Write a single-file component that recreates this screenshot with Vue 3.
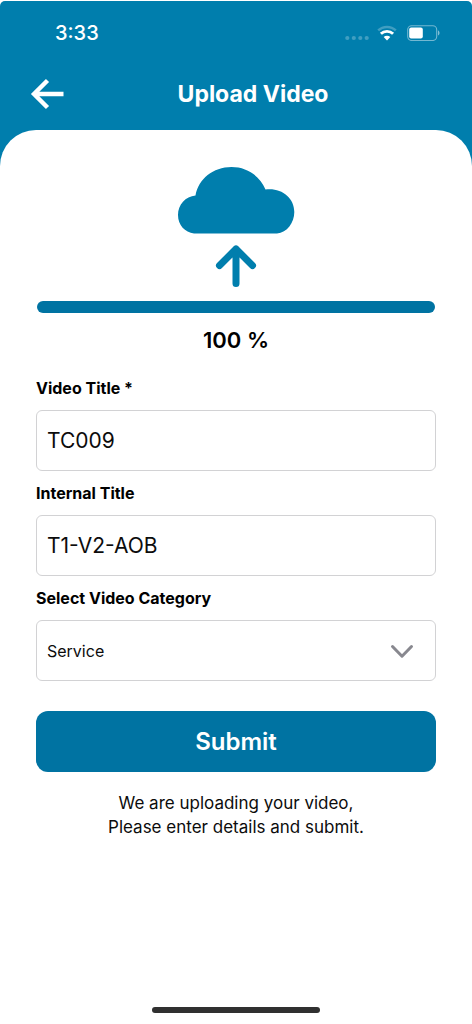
<script setup>
import { ref } from 'vue'

const progress = ref(100)
const videoTitle = ref('TC009')
const internalTitle = ref('T1-V2-AOB')
const category = ref('Service')
const categories = ['Service']
</script>

<template>
  <div class="screen">
    <header class="top">
      <div class="status">
        <span class="time">3:33</span>
        <div class="indicators">
          <svg class="dots" width="24" height="16" viewBox="0 0 24 16" aria-hidden="true">
            <g fill="#fff" opacity="0.25">
              <circle cx="2.3" cy="13" r="2.1" />
              <circle cx="8.8" cy="13" r="2.1" />
              <circle cx="15.3" cy="13" r="2.1" />
              <circle cx="21.7" cy="13" r="2.1" />
            </g>
          </svg>
          <svg class="wifi" width="20" height="16" viewBox="0 0 20 16" aria-hidden="true">
            <path d="M1.2 5.4A12.8 12.8 0 0 1 18.8 5.4" fill="none" stroke="#fff" stroke-width="2.5" opacity="0.25" />
            <path d="M3.9 8.8A8.8 8.8 0 0 1 16.1 8.8" fill="none" stroke="#fff" stroke-width="2.9" />
            <path d="M6.7 12.1A4.7 4.7 0 0 1 13.3 12.1L10 15.6Z" fill="#fff" />
          </svg>
          <svg class="battery" width="34" height="16" viewBox="0 0 34 16" aria-hidden="true">
            <rect x="0.7" y="0.7" width="29" height="14.8" rx="4" fill="none" stroke="#fff" stroke-width="1.1" opacity="0.45" />
            <rect x="2.2" y="2.6" width="13.6" height="11" rx="2" fill="#fff" />
            <path d="M31 5.6C33 6.2 33 9.8 31 10.6Z" fill="#fff" opacity="0.5" />
          </svg>
        </div>
      </div>
      <div class="bar">
        <button class="back" type="button" aria-label="Back">
          <svg width="34" height="32" viewBox="0 0 34 32" aria-hidden="true">
            <path d="M17.5 2.5L4 16L17.5 29.5M4 16H33.5" fill="none" stroke="#fff" stroke-width="4.4" />
          </svg>
        </button>
        <h1>Upload Video</h1>
      </div>
    </header>

    <main class="panel">
      <svg class="cloud" width="118" height="122" viewBox="0 0 118 122" aria-hidden="true">
        <path d="M17 67.5C8 66.5 1 59 1 49C1 38.5 8.5 30.5 18.5 29.5C21.5 13 36 1 54.5 1C70 1 83 10 88.5 23.6C104 21.5 117.3 31.5 117.3 46C117.3 57 110 66.5 100 67.5Z" fill="#007ead" />
        <path d="M59 117.5V83M42.5 99.5L59 83L75.5 99.5" fill="none" stroke="#007ead" stroke-width="7" stroke-linecap="round" stroke-linejoin="round" />
      </svg>
      <progress class="progress" :value="progress" max="100" aria-label="Upload progress"></progress>
      <p class="percent">{{ progress }} %</p>

      <form class="form" @submit.prevent>
        <div class="field">
          <label for="video-title">Video Title *</label>
          <input id="video-title" v-model="videoTitle" class="control" type="text" />
        </div>
        <div class="field">
          <label for="internal-title">Internal Title</label>
          <input id="internal-title" v-model="internalTitle" class="control" type="text" />
        </div>
        <div class="field">
          <label for="category">Select Video Category</label>
          <div class="select">
            <select id="category" v-model="category" class="control">
              <option v-for="item in categories" :key="item">{{ item }}</option>
            </select>
            <svg class="chevron" width="24" height="16" viewBox="0 0 24 16" aria-hidden="true">
              <path d="M2.5 2.5L12 12.2L21.5 2.5" fill="none" stroke="#88888f" stroke-width="3" stroke-linecap="round" stroke-linejoin="round" />
            </svg>
          </div>
        </div>
        <button class="submit" type="submit">Submit</button>
      </form>

      <p class="note">We are uploading your video,<br />Please enter details and submit.</p>
      <div class="home"></div>
    </main>
  </div>
</template>

<style>
body {
  margin: 0;
  background: #fff;
}
</style>

<style scoped>
.screen {
  box-sizing: border-box;
  min-height: 100vh;
  padding-top: 1px;
  display: flex;
  flex-direction: column;
  background: #fff;
  color: #000;
  font-family: Inter, "Liberation Sans", sans-serif;
}

.top {
  padding-bottom: 62px;
  border-radius: 5px 5px 0 0;
  background: #007ead;
  color: #fff;
}

.status {
  height: 63px;
  padding: 0 31px 0 55px;
  display: flex;
  align-items: center;
  justify-content: space-between;
}

.time {
  font-size: 20px;
  font-weight: 500;
}

.indicators {
  display: flex;
  align-items: center;
}

.dots {
  margin-right: 8px;
}

.wifi {
  margin-right: 10px;
}

.bar {
  height: 60px;
  padding: 0 30px;
  display: grid;
  grid-template-columns: 34px 1fr;
  align-items: center;
}

.back {
  padding: 0;
  display: flex;
  border: 0;
  background: none;
}

h1 {
  margin: 0;
  font-size: 23px;
  line-height: 32px;
  font-weight: 700;
  text-align: center;
}

.panel {
  flex: 1;
  margin-top: -56px;
  padding: 36px 36px 11px;
  display: flex;
  flex-direction: column;
  border-radius: 36px 36px 0 0;
  background: #fff;
}

.cloud {
  align-self: center;
}

.progress {
  width: auto;
  height: 12px;
  margin: 13px 1px 0;
  display: block;
  appearance: none;
  border: 0;
  border-radius: 6px;
  overflow: hidden;
  background: #e0e0e0;
}

.progress::-webkit-progress-bar {
  background: #e0e0e0;
}

.progress::-webkit-progress-value {
  background: #0073a2;
}

.percent {
  margin: 11px 0 20px;
  font-size: 22px;
  line-height: 32px;
  font-weight: 600;
  text-align: center;
}

.form {
  display: flex;
  flex-direction: column;
  gap: 10px;
}

.field {
  display: flex;
  flex-direction: column;
  gap: 10px;
}

label {
  font-size: 16px;
  line-height: 24px;
  font-weight: 700;
}

.control {
  box-sizing: border-box;
  width: 100%;
  height: 61px;
  padding: 0 10px;
  appearance: none;
  border: 1px solid #d2d2d4;
  border-radius: 6px;
  background: #fff;
  color: #0c0c0c;
  font-family: inherit;
  font-size: 21px;
}

.select {
  position: relative;
}

select.control {
  display: block;
  padding: 0 48px 0 10px;
  font-size: 16px;
}

.chevron {
  position: absolute;
  top: 24px;
  right: 22px;
  pointer-events: none;
}

.submit {
  height: 61px;
  margin-top: 20px;
  border: 0;
  border-radius: 12px;
  background: #0073a2;
  color: #fff;
  font-family: inherit;
  font-size: 24px;
  font-weight: 600;
}

.note {
  margin: 19px 0 24px;
  color: #0c0c0c;
  font-size: 17px;
  line-height: 24px;
  text-align: center;
}

.home {
  width: 42%;
  height: 6px;
  margin: auto auto 0;
  border-radius: 3px;
  background: #303030;
}
</style>
